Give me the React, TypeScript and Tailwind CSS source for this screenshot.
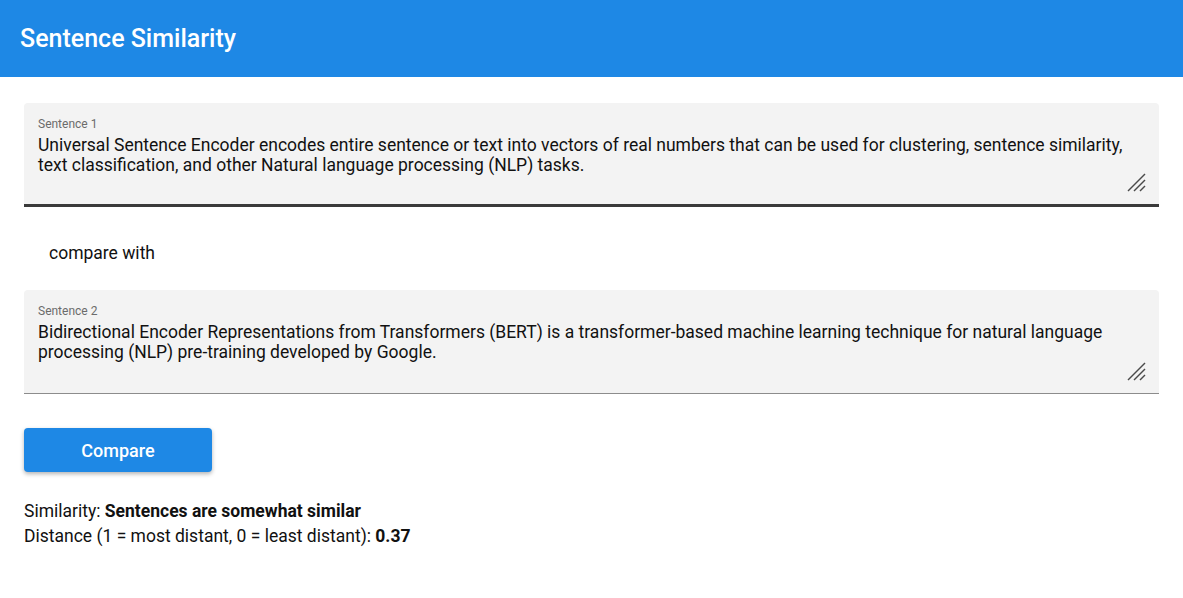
import React from "react";

function Grip() {
  return (
    <svg width="20" height="20" viewBox="0 0 20 20" className="absolute right-[12px] bottom-[11px]">
      <line x1="1" y1="18" x2="18" y2="1" stroke="#4a4a4a" strokeWidth="1.4" />
      <line x1="7" y1="18" x2="18" y2="7" stroke="#4a4a4a" strokeWidth="1.4" />
      <line x1="13" y1="18" x2="18" y2="13" stroke="#4a4a4a" strokeWidth="1.4" />
    </svg>
  );
}

function Field({ label, text, focused }: { label: string; text: string; focused?: boolean }) {
  return (
    <div
      className={`relative bg-[#f3f3f3] rounded-t-[4px] h-[104px] pl-[14px] pr-[30px] pt-[14px] ${
        focused ? "border-b-[3px] border-[#3a3a3a]" : "border-b border-[#8c8c8c]"
      }`}
    >
      <div className="text-[12px] leading-[14px] text-[#6b6b6b]">{label}</div>
      <div className="text-[17.5px] leading-[20px] text-[#111] mt-[4px]">{text}</div>
      <Grip />
    </div>
  );
}

export default function App() {
  return (
    <div className="w-[1183px] h-[598px] bg-white" style={{ fontFamily: "Roboto, 'Liberation Sans', sans-serif" }}>
      <div className="h-[77px] bg-[#1e88e5] flex items-center px-[20px]">
        <h1 className="text-white text-[25px] font-medium">Sentence Similarity</h1>
      </div>
      <div className="px-[24px] pt-[26px]">
        <Field
          label="Sentence 1"
          focused
          text="Universal Sentence Encoder encodes entire sentence or text into vectors of real numbers that can be used for clustering, sentence similarity, text classification, and other Natural language processing (NLP) tasks."
        />
        <div className="h-[83px] flex items-center pl-[25px] pt-[9px] text-[17.5px] text-[#111]">compare with</div>
        <Field
          label="Sentence 2"
          text="Bidirectional Encoder Representations from Transformers (BERT) is a transformer-based machine learning technique for natural language processing (NLP) pre-training developed by Google."
        />
        <button className="mt-[34px] w-[188px] h-[44px] bg-[#1e88e5] rounded-[4px] text-white text-[18px] font-medium shadow-[0_2px_4px_rgba(0,0,0,0.3)]">
          Compare
        </button>
        <div className="mt-[27px] text-[17.5px] leading-[25px] text-[#111]">
          <div>
            Similarity: <b className="font-bold">Sentences are somewhat similar</b>
          </div>
          <div>
            Distance (1 = most distant, 0 = least distant): <b className="font-bold">0.37</b>
          </div>
        </div>
      </div>
    </div>
  );
}
